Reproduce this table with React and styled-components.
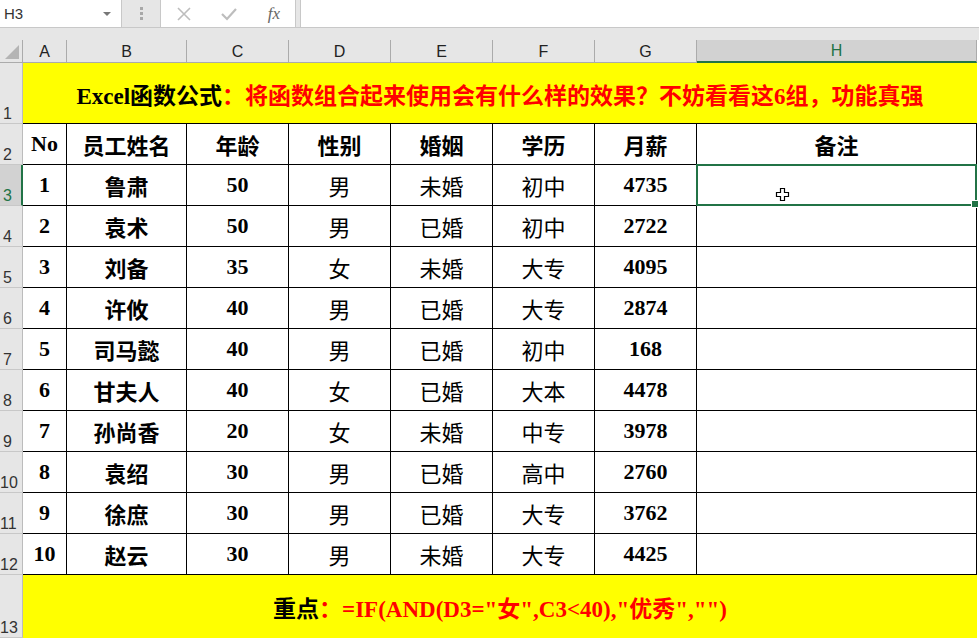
import React from 'react'
import styled, { createGlobalStyle, css } from 'styled-components'

const GlobalStyle = createGlobalStyle`
	html, body {
		margin: 0;
		padding: 0;
		background: #e6e6e6;
	}
	* {
		box-sizing: border-box;
	}
`

const GREEN = '#217346'
const CELL_FONT = `"Liberation Serif", "Noto Sans CJK SC", serif`
const UI_FONT = `"Liberation Sans", "Noto Sans", sans-serif`

const Window = styled.div`
	width: 979px;
	height: 638px;
	overflow: hidden;
	background: #e6e6e6;
	display: flex;
	flex-direction: column;
`

const FormulaBar = styled.div`
	height: 28px;
	display: flex;
	border-bottom: 1px solid #c8c8c8;
	flex-shrink: 0;
`

const NameBox = styled.div`
	width: 122px;
	background: #fff;
	border-right: 1px solid #c8c8c8;
	display: flex;
	align-items: center;
	justify-content: space-between;
	padding: 0 10px 0 4px;
	font: 15px ${UI_FONT};
	color: #333;
`

const DropArrow = styled.span`
	width: 0;
	height: 0;
	border-left: 4px solid transparent;
	border-right: 4px solid transparent;
	border-top: 4px solid #777;
`

const Grip = styled.div`
	width: 38px;
	display: flex;
	flex-direction: column;
	align-items: center;
	justify-content: center;
	gap: 2px;

	span {
		width: 3px;
		height: 3px;
		background: #a8a8a8;
	}
`

const FuncBox = styled.div`
	width: 136px;
	background: #fff;
	border-left: 1px solid #c8c8c8;
	border-right: 1px solid #c8c8c8;
	display: flex;
	align-items: center;
	padding: 0 15px 0 16px;
	justify-content: space-between;
`

const FuncIcon = styled.span`
	display: flex;
	align-items: center;
	color: ${(p) => p.color || '#bdbdbd'};
	font: ${(p) => (p.fx ? 'italic 17px "Liberation Serif", serif' : '16px ' + UI_FONT)};
`

const FormulaInput = styled.div`
	flex: 1;
	margin-left: 4px;
	background: #fff;
	border-left: 1px solid #c8c8c8;
`

const Spacer = styled.div`
	height: 12px;
	flex-shrink: 0;
`

const Sheet = styled.div`
	display: grid;
	grid-template-columns: 23px 44px 120px repeat(5, 102px) 280px;
	grid-template-rows: 23px 61px repeat(11, 41px) 63px;
	background: #fff;
	width: 979px;
`

const Corner = styled.div`
	background: #e6e6e6;
	border-right: 1px solid #ababab;
	border-bottom: 1px solid #ababab;
	position: relative;

	&::after {
		content: '';
		position: absolute;
		right: 3px;
		bottom: 3px;
		border-left: 14px solid transparent;
		border-bottom: 14px solid #b4b4b4;
	}
`

const ColHead = styled.div`
	background: ${(p) => (p.active ? '#d2d2d2' : '#e6e6e6')};
	border-right: 1px solid #ababab;
	border-bottom: ${(p) => (p.active ? `2px solid ${GREEN}` : '1px solid #ababab')};
	display: flex;
	align-items: flex-end;
	justify-content: center;
	padding-bottom: 1px;
	font: 16px ${UI_FONT};
	color: ${(p) => (p.active ? GREEN : '#222')};
`

const RowHead = styled.div`
	background: ${(p) => (p.active ? '#d2d2d2' : '#e6e6e6')};
	border-right: ${(p) => (p.active ? `2px solid ${GREEN}` : '1px solid #bcbcbc')};
	border-bottom: 1px solid #c8c8c8;
	display: flex;
	align-items: flex-end;
	padding: 0 0 0 ${(p) => (p.wide ? 0 : 3)}px;
	font: 16px ${UI_FONT};
	line-height: 18px;
	color: ${(p) => (p.active ? GREEN : '#333')};
`

const Banner = styled.div`
	grid-column: 2 / span 8;
	background: #ffff00;
	border-bottom: 1px solid #000;
	display: flex;
	align-items: center;
	justify-content: center;
	padding-top: ${(p) => p.pt || 0}px;
	font: bold ${(p) => p.size}px ${CELL_FONT};
	color: #000;
	white-space: nowrap;
	${(p) =>
		p.last &&
		css`
			border-bottom: none;
		`}
`

const Red = styled.span`
	color: #ff0000;
`

const Cell = styled.div`
	position: relative;
	border-right: 1px solid #000;
	border-bottom: 1px solid #000;
	display: flex;
	align-items: center;
	justify-content: center;
	font: ${(p) => (p.light ? 'normal' : 'bold')} 22px ${CELL_FONT};
	color: #000;
	white-space: nowrap;

	${(p) =>
		p.selected &&
		css`
			&::after {
				content: '';
				position: absolute;
				left: -1px;
				top: -1px;
				right: -1px;
				bottom: -1px;
				border: 2px solid ${GREEN};
			}
			&::before {
				content: '';
				position: absolute;
				right: -3px;
				bottom: -3px;
				width: 6px;
				height: 6px;
				background: ${GREEN};
				border: 1px solid #fff;
				z-index: 2;
			}
		`}
`

const Cursor = styled.svg`
	position: absolute;
	left: 78px;
	top: 22px;
`

const columns = ['A', 'B', 'C', 'D', 'E', 'F', 'G', 'H']
const headers = ['No', '员工姓名', '年龄', '性别', '婚姻', '学历', '月薪', '备注']
const rows = [
	['1', '鲁肃', '50', '男', '未婚', '初中', '4735'],
	['2', '袁术', '50', '男', '已婚', '初中', '2722'],
	['3', '刘备', '35', '女', '未婚', '大专', '4095'],
	['4', '许攸', '40', '男', '已婚', '大专', '2874'],
	['5', '司马懿', '40', '男', '已婚', '初中', '168'],
	['6', '甘夫人', '40', '女', '已婚', '大本', '4478'],
	['7', '孙尚香', '20', '女', '未婚', '中专', '3978'],
	['8', '袁绍', '30', '男', '已婚', '高中', '2760'],
	['9', '徐庶', '30', '男', '已婚', '大专', '3762'],
	['10', '赵云', '30', '男', '未婚', '大专', '4425'],
]

function PlusCursor() {
	return (
		<Cursor width='15' height='15' viewBox='0 0 15 15'>
			<path
				d='M5.5 1.5h4v4h4v4h-4v4h-4v-4h-4v-4h4z'
				fill='#fff'
				stroke='#000'
				strokeWidth='1.2'
			/>
		</Cursor>
	)
}

function App() {
	return (
		<Window>
			<GlobalStyle />
			<FormulaBar>
				<NameBox>
					H3
					<DropArrow />
				</NameBox>
				<Grip>
					<span />
					<span />
					<span />
				</Grip>
				<FuncBox>
					<FuncIcon>
						<svg width='14' height='14' viewBox='0 0 14 14'>
							<path d='M1 1l12 12M13 1L1 13' stroke='#bdbdbd' strokeWidth='1.6' />
						</svg>
					</FuncIcon>
					<FuncIcon>
						<svg width='16' height='14' viewBox='0 0 16 14'>
							<path d='M1 7l5 5L15 2' stroke='#bdbdbd' strokeWidth='2.2' fill='none' />
						</svg>
					</FuncIcon>
					<FuncIcon fx color='#666'>
						fx
					</FuncIcon>
				</FuncBox>
				<FormulaInput />
			</FormulaBar>
			<Spacer />
			<Sheet>
				<Corner />
				{columns.map((c) => (
					<ColHead key={c} active={c === 'H'}>
						{c}
					</ColHead>
				))}

				<RowHead>1</RowHead>
				<Banner size={23} pt={1}>
					Excel函数公式<Red>：将函数组合起来使用会有什么样的效果？不妨看看这6组，功能真强</Red>
				</Banner>

				<RowHead>2</RowHead>
				{headers.map((h) => (
					<Cell key={h}>{h}</Cell>
				))}

				{rows.map((r, i) => (
					<React.Fragment key={r[0]}>
						<RowHead active={i === 0} wide={i >= 7}>
							{i + 3}
						</RowHead>
						{r.map((v, j) => (
							<Cell key={j} light={j >= 3 && j <= 5}>
								{v}
							</Cell>
						))}
						<Cell selected={i === 0}>{i === 0 && <PlusCursor />}</Cell>
					</React.Fragment>
				))}

				<RowHead wide>13</RowHead>
				<Banner size={23} last>
					重点<Red>：=IF(AND(D3="女",C3&lt;40),"优秀","")</Red>
				</Banner>
			</Sheet>
		</Window>
	)
}

export default App
